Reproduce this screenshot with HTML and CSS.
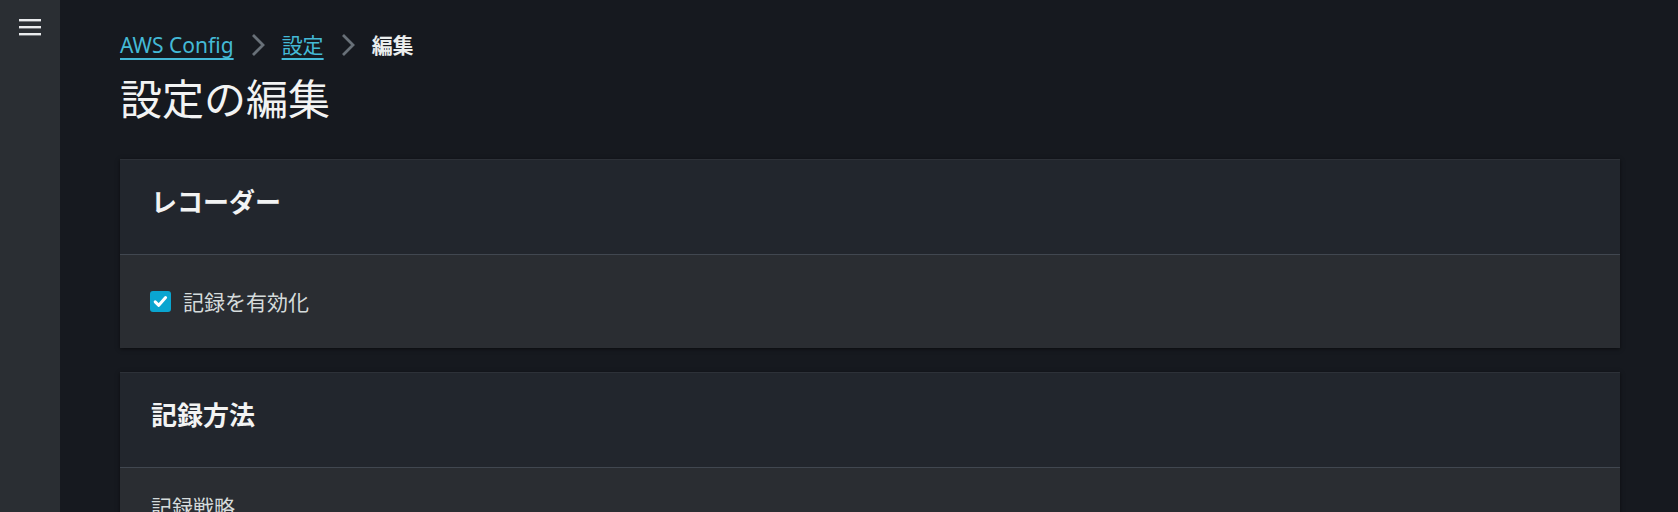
FILE: index.html
```html
<!DOCTYPE html>
<html lang="ja">
<head>
<meta charset="utf-8">
<title>設定の編集</title>
<link rel="stylesheet" href="styles.css">
</head>
<body>
<div class="layout">
  <aside class="sidebar">
    <button class="menu-btn" aria-label="メニュー">
      <svg width="22" height="18" viewBox="0 0 22 18"><rect x="0" y="1" width="22" height="2.4" fill="#e9ebed"/><rect x="0" y="8" width="22" height="2.4" fill="#e9ebed"/><rect x="0" y="15" width="22" height="2.4" fill="#e9ebed"/></svg>
    </button>
  </aside>
  <main class="main">
    <nav class="breadcrumb">
      <a href="#" class="crumb-link">AWS Config</a>
      <svg class="chev" width="14" height="24" viewBox="0 0 14 24"><path d="M2 2 L12 12 L2 22" fill="none" stroke="#687078" stroke-width="2.8"/></svg>
      <a href="#" class="crumb-link">設定</a>
      <svg class="chev" width="14" height="24" viewBox="0 0 14 24"><path d="M2 2 L12 12 L2 22" fill="none" stroke="#687078" stroke-width="2.8"/></svg>
      <span class="crumb-current">編集</span>
    </nav>
    <h1 class="page-title">設定の編集</h1>

    <section class="panel">
      <div class="panel-header"><h2 class="panel-title">レコーダー</h2></div>
      <div class="panel-body panel-body-center">
        <label class="checkbox-row">
          <span class="checkbox">
            <svg width="21" height="21" viewBox="0 0 21 21"><path d="M5.2 10.8 L8.8 14.3 L15.6 6.6" fill="none" stroke="#ffffff" stroke-width="3" stroke-linecap="round" stroke-linejoin="round"/></svg>
          </span>
          <span class="checkbox-label">記録を有効化</span>
        </label>
      </div>
    </section>

    <section class="panel">
      <div class="panel-header"><h2 class="panel-title">記録方法</h2></div>
      <div class="panel-body">
        <div class="field-label">記録戦略</div>
        <div class="field-space"></div>
      </div>
    </section>
  </main>
</div>
</body>
</html>
```

FILE: styles.css
```css
html, body {
  margin: 0;
  padding: 0;
  height: 100%;
  overflow: hidden;
}
body {
  background: #16191f;
  color: #d1d5db;
  font-family: "Noto Sans", "Noto Sans CJK JP", sans-serif;
  font-size: 21px;
  line-height: 30px;
}
.layout {
  display: flex;
  min-height: 100vh;
}
.sidebar {
  width: 60px;
  flex: 0 0 60px;
  background: #2a2e33;
  display: flex;
  flex-direction: column;
  align-items: center;
}
.menu-btn {
  margin-top: 18px;
  background: none;
  border: 0;
  padding: 0;
  width: 22px;
  height: 18px;
  display: flex;
  cursor: pointer;
}
.main {
  flex: 1;
  padding: 30px 58px 0 60px;
  display: flex;
  flex-direction: column;
}
.breadcrumb {
  display: flex;
  align-items: center;
  gap: 17px;
  height: 30px;
}
.crumb-link {
  color: #44b9d6;
  text-decoration: underline;
  text-decoration-thickness: 2px;
  text-underline-offset: 5px;
}
.chev {
  display: block;
}
.crumb-current {
  color: #eaeded;
  font-weight: 700;
}
.page-title {
  margin: 12px 0 33px;
  font-size: 42px;
  line-height: 54px;
  font-weight: 400;
  color: #f2f3f3;
}
.panel {
  background: #2a2d32;
  border-top: 1px solid #2d3138;
  box-shadow: 0 1px 4px rgba(0, 0, 0, 0.55);
  margin-bottom: 24px;
}
.panel-header {
  background: #22262d;
  height: 95px;
  box-sizing: border-box;
  padding: 0 30px 10px 31px;
  display: flex;
  align-items: center;
  border-bottom: 1px solid #414750;
}
.panel-title {
  margin: 0;
  font-size: 26px;
  line-height: 36px;
  font-weight: 700;
  color: #f2f3f3;
}
.panel-body {
  padding: 24px 30px 24px 31px;
}
.panel-body-center {
  height: 93px;
  box-sizing: border-box;
  padding: 0 30px;
  display: flex;
  align-items: center;
}
.checkbox-row {
  display: flex;
  align-items: center;
  gap: 12px;
  cursor: pointer;
}
.checkbox {
  width: 21px;
  height: 21px;
  border-radius: 3px;
  background: #0aa5d0;
  display: flex;
}
.checkbox-label {
  color: #d5dbdb;
}
.field-label {
  color: #d5dbdb;
}
.field-space {
  height: 120px;
}
```
